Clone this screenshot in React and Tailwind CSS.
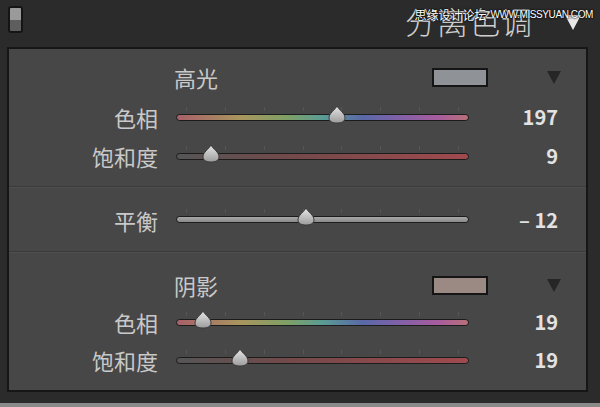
import React from "react";

const HUE =
  "linear-gradient(to right, #a8606a 0%, #a8965e 22%, #7ea066 38%, #5a9c94 50%, #5a68a8 64%, #8660a8 78%, #a85c9c 90%, #b87078 100%)";
const SAT = "linear-gradient(to right, #555 0%, #74494a 40%, #a04a4e 100%)";
const BAL = "linear-gradient(to bottom, #a8a8a8, #8a8a8a)";

function Thumb({ left }) {
  return (
    <svg
      className="absolute top-[-9px]"
      style={{ left: left - 9 }}
      width="18"
      height="19"
      viewBox="0 0 18 19"
    >
      <defs>
        <linearGradient id="tg" x1="0" y1="0" x2="0" y2="1">
          <stop offset="0" stopColor="#e6e6e6" />
          <stop offset="1" stopColor="#9c9c9c" />
        </linearGradient>
      </defs>
      <path
        d="M9 1 C11 5 17 8 17 13 C17 16.5 13.5 18 9 18 C4.5 18 1 16.5 1 13 C1 8 7 5 9 1 Z"
        fill="url(#tg)"
        stroke="#3a3a3a"
        strokeWidth="1"
      />
    </svg>
  );
}

function Slider({ label, value, pos, bg }) {
  return (
    <div className="flex items-center h-full">
      <div className="w-[149px] text-right text-[22px] text-[#c9c9c9] leading-none">{label}</div>
      <div className="relative ml-[18px] w-[293px] h-[7px]">
        <div className="absolute top-[-7px] left-[10px] right-[10px] flex justify-between">
          {[0, 1, 2, 3, 4, 5, 6, 7].map((i) => (
            <span key={i} className="w-px h-[4px] bg-[#565656]" />
          ))}
        </div>
        <div
          className="w-full h-full rounded-full border border-[#1c1c1c]"
          style={{ background: bg }}
        />
        <Thumb left={pos} />
      </div>
      <div className="w-[89px] text-right text-[20px] font-bold text-[#e2e2e2] leading-none">
        {value}
      </div>
    </div>
  );
}

function Head({ label, swatch }) {
  return (
    <div className="flex items-center h-full">
      <div className="w-[209px] text-right text-[22px] text-[#c9c9c9] leading-none">{label}</div>
      <div className="ml-[214px] w-[56px] h-[19px] border-2 border-[#151515]" style={{ background: swatch }} />
      <div className="ml-[59px] w-0 h-0 border-l-[7px] border-r-[7px] border-t-[13px] border-l-transparent border-r-transparent border-t-[#262626]" />
    </div>
  );
}

export default function App() {
  return (
    <div
      className="relative w-[600px] h-[407px] bg-[#2b2b2b] overflow-hidden"
      style={{ fontFamily: '"Noto Sans CJK SC", "Liberation Sans", sans-serif' }}
    >
      {/* header */}
      <div className="h-[47px] flex items-start">
        <div className="ml-[8px] mt-[6px] w-[15px] h-[27px] rounded-[3px] border-2 border-[#151515] flex flex-col overflow-hidden">
          <div className="flex-1 bg-[#9a9a9a]" />
          <div className="flex-1 bg-[#5e5e5e]" />
        </div>
        <div className="ml-auto mt-[2px] text-[31px] font-light text-[#cfcfcf] leading-[38px] tracking-[1px]">分离色调</div>
        <div className="ml-[32px] mr-[19px] mt-[15px] w-0 h-0 border-l-[8px] border-r-[8px] border-t-[15px] border-l-transparent border-r-transparent border-t-[#e8e8e8]" />
      </div>

      {/* watermark */}
      <div
        className="absolute top-[9px] right-[7px] flex items-center gap-[4px] whitespace-nowrap text-white text-[12px] leading-none"
        style={{ textShadow: "0 0 2px #000, 0 0 2px #000" }}
      >
        <span>思缘设计论坛</span>
        <span className="text-[10px] tracking-[-0.4px]" style={{ fontFamily: '"Liberation Sans", sans-serif' }}>
          WWW.MISSYUAN.COM
        </span>
      </div>

      {/* panel */}
      <div className="ml-[7px] w-[581px] h-[345px] border-2 border-[#161616] bg-[#474747] flex flex-col">
        <div className="h-[138px] flex flex-col border-b border-[#3a3a3a]">
          <div className="mt-[9px] h-[38px]">
            <Head label="高光" swatch="#8f9398" />
          </div>
          <div className="h-[42px]">
            <Slider label="色相" value="197" pos={161} bg={HUE} />
          </div>
          <div className="h-[36px]">
            <Slider label="饱和度" value="9" pos={35} bg={SAT} />
          </div>
        </div>
        <div className="h-[65px] border-t border-[#4f4f4f] border-b border-b-[#3a3a3a]">
          <Slider label="平衡" value="– 12" pos={130} bg={BAL} />
        </div>
        <div className="flex-1 flex flex-col border-t border-[#4f4f4f]">
          <div className="mt-[13px] h-[38px]">
            <Head label="阴影" swatch="#9b8a84" />
          </div>
          <div className="h-[36px]">
            <Slider label="色相" value="19" pos={27} bg={HUE} />
          </div>
          <div className="h-[40px]">
            <Slider label="饱和度" value="19" pos={64} bg={SAT} />
          </div>
        </div>
      </div>
      <div className="absolute bottom-0 left-0 w-full h-[4px] bg-[#8a8a8a]" />
    </div>
  );
}
